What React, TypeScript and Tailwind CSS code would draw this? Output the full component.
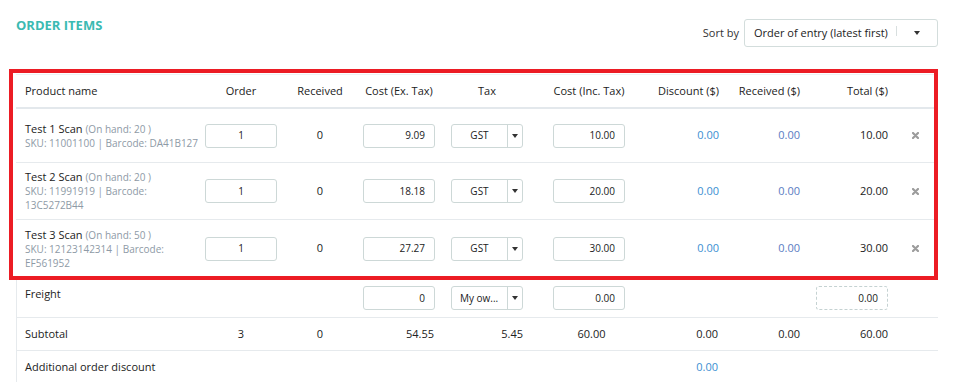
import React from "react";

const Caret = ({ className = "" }: { className?: string }) => (
  <svg width="6" height="4" viewBox="0 0 6 4" className={className}>
    <path d="M0 0 L6 0 L3 4 Z" fill="#333" />
  </svg>
);

const XIcon = () => (
  <svg width="7" height="7" viewBox="0 0 7 7">
    <path d="M1 1 L6 6 M6 1 L1 6" stroke="#9c9c9c" strokeWidth="2.2" strokeLinecap="round" />
  </svg>
);

const Input = ({ value, align = "right", dashed = false }: { value: string; align?: "right" | "center"; dashed?: boolean }) => (
  <div
    className={`w-[72px] h-[24px] rounded-[3px] bg-white flex items-center text-[10px] text-[#222] ${
      dashed ? "border border-dashed border-[#c5d2d2]" : "border border-[#cdd8d7]"
    } ${align === "center" ? "justify-center" : "justify-end pr-[9px]"}`}
  >
    {value}
  </div>
);

const TaxSelect = ({ value }: { value: string }) => (
  <div className="w-[72px] h-[24px] rounded-[3px] border border-[#cdd8d7] bg-white flex items-stretch text-[10px] text-[#222]">
    <div className="flex-1 flex items-center justify-center">{value}</div>
    <div className="w-[15px] border-l border-[#cdd8d7] flex items-center justify-center">
      <Caret />
    </div>
  </div>
);

const GRID =
  "grid grid-cols-[181px_88px_70px_88px_88px_116px_82px_81px_88px_40px]";

const rows = [
  { name: "Test 1 Scan", onhand: "20", skuLines: ["SKU: 11001100 | Barcode: DA41B127"], cost: "9.09", inc: "10.00", total: "10.00", h: "h-[54px]" },
  { name: "Test 2 Scan", onhand: "20", skuLines: ["SKU: 11991919 | Barcode:", "13C5272B44"], cost: "18.18", inc: "20.00", total: "20.00", h: "h-[57px]" },
  { name: "Test 3 Scan", onhand: "50", skuLines: ["SKU: 12123142314 | Barcode:", "EF561952"], cost: "27.27", inc: "30.00", total: "30.00", h: "h-[57px]" },
];

export default function App() {
  return (
    <div className="relative w-[953px] h-[382px] overflow-hidden bg-white font-['Open_Sans',_'Liberation_Sans',_sans-serif] text-[#222]">
      {/* Top bar */}
      <div className="h-[74px] pl-[16px] pr-[15px] flex items-start justify-between">
        <div className="mt-[16px] text-[13px] leading-[18px] font-bold text-[#3bbab2]">ORDER ITEMS</div>
        <div className="mt-[19px] flex items-center">
          <span className="text-[11px] mr-[5px] text-[#333]">Sort by</span>
          <div className="w-[194px] h-[28px] rounded-[3px] border border-[#d3dddc] flex items-center pl-[9px] text-[11px] text-[#222]">
            <span className="whitespace-nowrap">Order of entry (latest first)</span>
            <div className="ml-[8px] w-px h-[10px] bg-[#d8dfdf] -mt-[4px]" />
            <Caret className="ml-[17px]" />
          </div>
        </div>
      </div>

      {/* Table */}
      <div className="ml-[16px] w-[922px] border-t border-[#eef1f3]">
        {/* Header */}
        <div className={`${GRID} h-[34px] border-b-2 border-[#e3e8ec] items-center text-[11px] text-[#222]`}>
          <div className="pl-[9px]">Product name</div>
          <div className="text-center">Order</div>
          <div className="text-center">Received</div>
          <div className="text-center">Cost (Ex. Tax)</div>
          <div className="text-center">Tax</div>
          <div className="text-center">Cost (Inc. Tax)</div>
          <div className="text-right pr-[10px] whitespace-nowrap">Discount ($)</div>
          <div className="text-right pr-[10px] whitespace-nowrap">Received ($)</div>
          <div className="text-right pr-[10px]">Total ($)</div>
          <div />
        </div>

        {rows.map((r, i) => (
          <div
            key={r.name}
            className={`${GRID} ${r.h} items-center ${i < rows.length - 1 ? "border-b border-[#e6eaed]" : ""}`}
          >
            <div className="pl-[9px] whitespace-nowrap">
              <div className="text-[11px] leading-[14px] text-[#222]">
                {r.name} <span className="text-[10px] text-[#8e9aa6]">(On hand: {r.onhand} )</span>
              </div>
              {r.skuLines.map((l) => (
                <div key={l} className="text-[10px] leading-[14px] text-[#8e9aa6]">{l}</div>
              ))}
            </div>
            <div className="flex justify-center"><Input value="1" align="center" /></div>
            <div className="text-center text-[11px]">0</div>
            <div className="flex justify-center"><Input value={r.cost} /></div>
            <div className="flex justify-center"><TaxSelect value="GST" /></div>
            <div className="flex justify-center"><Input value={r.inc} /></div>
            <div className="text-right pr-[10px] text-[11px] text-[#3b8fd2]">0.00</div>
            <div className="text-right pr-[10px] text-[11px] text-[#5a7cc2]">0.00</div>
            <div className="text-right pr-[10px] text-[11px] text-[#222]">{r.total}</div>
            <div className="flex justify-center pr-[6px]"><XIcon /></div>
          </div>
        ))}

        {/* Footer rows */}
        <div className="shadow-[inset_1px_0_0_#e6eaed]">
          <div className={`${GRID} h-[41px] items-start pt-[9px] border-b border-[#e6eaed]`}>
            <div className="pl-[9px] text-[11px] leading-[16px]">Freight</div>
            <div />
            <div />
            <div className="flex justify-center"><Input value="0" /></div>
            <div className="flex justify-center">
              <div className="w-[72px] h-[24px] rounded-[3px] border border-[#cdd8d7] bg-white flex items-stretch text-[10px] text-[#222]">
                <div className="flex-1 flex items-center pl-[8px] whitespace-nowrap overflow-hidden">My ow...</div>
                <div className="w-[15px] border-l border-[#cdd8d7] flex items-center justify-center">
                  <Caret />
                </div>
              </div>
            </div>
            <div className="flex justify-center"><Input value="0.00" /></div>
            <div />
            <div />
            <div className="flex justify-end pr-[10px]"><Input value="0.00" dashed /></div>
            <div />
          </div>
          <div className={`${GRID} h-[33px] items-center border-b border-[#e6eaed] text-[11px] text-[#222]`}>
            <div className="pl-[9px]">Subtotal</div>
            <div className="text-center">3</div>
            <div className="text-center">0</div>
            <div className="text-right pr-[9px]">54.55</div>
            <div className="text-right pr-[8px]">5.45</div>
            <div className="text-center pl-[5px]">60.00</div>
            <div className="text-right pr-[11px]">0.00</div>
            <div className="text-right pr-[10px]">0.00</div>
            <div className="text-right pr-[10px]">60.00</div>
            <div />
          </div>
          <div className={`${GRID} h-[33px] items-center text-[11px] text-[#222]`}>
            <div className="pl-[9px] whitespace-nowrap">Additional order discount</div>
            <div />
            <div />
            <div />
            <div />
            <div />
            <div className="text-right pr-[11px] text-[#3b8fd2]">0.00</div>
            <div />
            <div />
            <div />
          </div>
        </div>
      </div>

      {/* Red highlight annotation */}
      <div className="absolute left-[9px] top-[69px] w-[929px] h-[211px] border-[4px] border-[#ec1c24] pointer-events-none" />
    </div>
  );
}
